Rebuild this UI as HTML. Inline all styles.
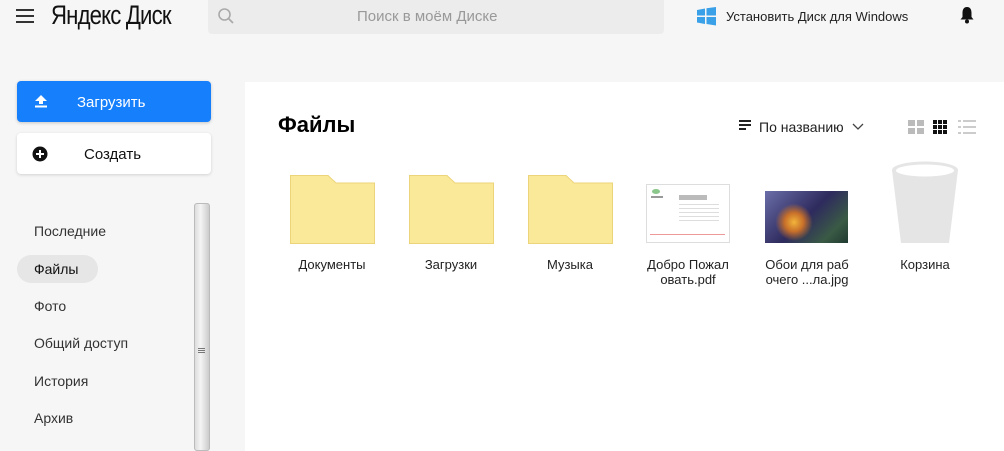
<!DOCTYPE html>
<html><head><meta charset="utf-8"><style>
*{margin:0;padding:0;box-sizing:border-box}
body{width:1004px;height:451px;overflow:hidden;background:#f6f6f6;font-family:"Liberation Sans",sans-serif;color:#222;position:relative}
.a{position:absolute}
.nav{left:34px;font-size:14px;color:#333}
.lbl{font-size:13px;color:#222;text-align:center;width:110px;line-height:15px}
.fold{width:84px;height:68px}
</style></head><body>
<div class="a" style="left:16px;top:9px;width:18px;height:2px;background:#333;box-shadow:0 6px 0 #333,0 12px 0 #333"></div>
<div class="a" style="left:51px;top:0px;font-size:27px;letter-spacing:-1px;color:#111;transform:scaleX(.82);transform-origin:left">Яндекс Диск</div>
<div class="a" style="left:208px;top:0;width:456px;height:34px;background:#ececec;border-radius:0 0 4px 4px"></div>
<svg class="a" style="left:217px;top:7px" width="18" height="18"><circle cx="7.5" cy="7.5" r="5.5" fill="none" stroke="#aaa" stroke-width="1.6"/><path d="M11.5 11.5L16 16" stroke="#aaa" stroke-width="1.8"/></svg>
<div class="a" style="left:357px;top:8px;font-size:15px;color:#999">Поиск в моём Диске</div>
<svg class="a" style="left:696px;top:6px" width="22" height="20"><path d="M1 4L9 2.5V9.5H1Z M10.5 2.2L20 1V9.5H10.5Z M1 11H9V18L1 16.5Z M10.5 11H20V19.5L10.5 18Z" fill="#3aa0e8"/></svg>
<div class="a" style="left:726px;top:9px;font-size:13px;color:#222">Установить Диск для Windows</div>
<svg class="a" style="left:958px;top:5px" width="18" height="20"><path d="M9 2C5.5 2 4.5 5 4.5 8V12L2.5 14.5H15.5L13.5 12V8C13.5 5 12.5 2 9 2Z" fill="#111"/><circle cx="9" cy="16.5" r="2" fill="#111"/></svg>

<div class="a" style="left:17px;top:81px;width:194px;height:41px;background:#167ffc;border-radius:4px;box-shadow:0 1px 3px rgba(0,0,0,.2)"></div>
<svg class="a" style="left:33px;top:94px" width="16" height="14"><path d="M8 1L14 7H10V10H6V7H2Z" fill="#fff"/><rect x="2" y="11.5" width="12" height="2" fill="#fff"/></svg>
<div class="a" style="left:77px;top:94px;font-size:15px;color:#fff">Загрузить</div>
<div class="a" style="left:17px;top:133px;width:194px;height:41px;background:#fff;border-radius:4px;box-shadow:0 1px 3px rgba(0,0,0,.15)"></div>
<svg class="a" style="left:32px;top:146px" width="16" height="16"><circle cx="8" cy="8" r="7.5" fill="#111"/><path d="M8 4V12M4 8H12" stroke="#fff" stroke-width="2"/></svg>
<div class="a" style="left:84px;top:146px;font-size:15px;color:#111">Создать</div>

<div class="a nav" style="top:223px">Последние</div>
<div class="a" style="left:17px;top:255px;width:81px;height:28px;background:#e6e6e6;border-radius:14px"></div>
<div class="a nav" style="top:261px;color:#111">Файлы</div>
<div class="a nav" style="top:298px">Фото</div>
<div class="a nav" style="top:335px">Общий доступ</div>
<div class="a nav" style="top:373px">История</div>
<div class="a nav" style="top:410px">Архив</div>
<div class="a" style="left:194px;top:203px;width:16px;height:248px;background:linear-gradient(90deg,#ddd,#f4f4f4 40%,#ccc);border:1px solid #bbb;border-radius:3px"></div>
<div class="a" style="left:198px;top:348px;width:7px;height:1px;background:#777;box-shadow:0 2px 0 #777,0 4px 0 #777"></div>

<div class="a" style="left:245px;top:82px;width:759px;height:369px;background:#fff"></div>
<div class="a" style="left:278px;top:112px;font-size:22px;font-weight:bold;color:#000">Файлы</div>
<div class="a" style="left:739px;top:120px;width:12px;height:2px;background:#222;box-shadow:0 4px 0 #222"></div>
<div class="a" style="left:739px;top:128px;width:7px;height:2px;background:#222"></div>
<div class="a" style="left:759px;top:119px;font-size:14px;color:#222">По названию</div>
<svg class="a" style="left:852px;top:123px" width="12" height="8"><path d="M1 1L6 6L11 1" fill="none" stroke="#444" stroke-width="1.3"/></svg>
<svg class="a" style="left:908px;top:119px" width="70" height="16">
<g fill="#bbb"><rect x="0" y="1" width="7" height="6"/><rect x="9" y="1" width="7" height="6"/><rect x="0" y="9" width="7" height="6"/><rect x="9" y="9" width="7" height="6"/></g>
<g fill="#111"><rect x="25" y="1" width="4" height="4"/><rect x="30" y="1" width="4" height="4"/><rect x="35" y="1" width="4" height="4"/><rect x="25" y="6" width="4" height="4"/><rect x="30" y="6" width="4" height="4"/><rect x="35" y="6" width="4" height="4"/><rect x="25" y="11" width="4" height="4"/><rect x="30" y="11" width="4" height="4"/><rect x="35" y="11" width="4" height="4"/></g>
<g fill="#ccc"><rect x="50" y="1" width="3" height="2"/><rect x="55" y="1" width="13" height="2"/><rect x="50" y="7" width="3" height="2"/><rect x="55" y="7" width="13" height="2"/><rect x="50" y="13" width="3" height="2"/><rect x="55" y="13" width="13" height="2"/></g></svg>

<svg class="a" style="left:290px;top:175px" width="85" height="69"><path d="M0.5 0.5H38L46 8H84.5V68.5H0.5Z" fill="#fbe99a" stroke="#ecd47a"/></svg>
<svg class="a" style="left:409px;top:175px" width="85" height="69"><path d="M0.5 0.5H38L46 8H84.5V68.5H0.5Z" fill="#fbe99a" stroke="#ecd47a"/></svg>
<svg class="a" style="left:528px;top:175px" width="85" height="69"><path d="M0.5 0.5H38L46 8H84.5V68.5H0.5Z" fill="#fbe99a" stroke="#ecd47a"/></svg>
<div class="a" style="left:646px;top:184px;width:84px;height:59px;background:#fff;border:1px solid #ddd">
<div class="a" style="left:5px;top:4px;width:8px;height:5px;background:#8bc78b;border-radius:50%"></div>
<div class="a" style="left:4px;top:11px;width:12px;height:2px;background:#999"></div>
<div class="a" style="left:32px;top:10px;width:28px;height:5px;background:#bbb"></div>
<div class="a" style="left:32px;top:19px;width:40px;height:18px;background:repeating-linear-gradient(#ddd 0 1px,#fff 1px 4px)"></div>
<div class="a" style="left:3px;top:49px;width:75px;height:1px;background:#e99"></div></div>
<div class="a" style="left:765px;top:191px;width:83px;height:52px;background:radial-gradient(circle at 35% 60%,#f2b43a 0,#c8702a 15%,transparent 30%),linear-gradient(135deg,#6a6ea8 0,#2e2a5e 50%,#3a5a45 80%,#203a30 100%)"></div>
<svg class="a" style="left:891px;top:161px" width="68" height="83"><path d="M1 9L10 82H58L67 9Z" fill="#e5e5e5"/><ellipse cx="34" cy="9" rx="33" ry="8.5" fill="#e5e5e5"/><ellipse cx="34" cy="9.5" rx="29" ry="6" fill="#fff"/></svg>

<div class="a lbl" style="left:277px;top:257px">Документы</div>
<div class="a lbl" style="left:396px;top:257px">Загрузки</div>
<div class="a lbl" style="left:515px;top:257px">Музыка</div>
<div class="a lbl" style="left:633px;top:257px">Добро Пожал<br>овать.pdf</div>
<div class="a lbl" style="left:752px;top:257px">Обои для раб<br>очего ...ла.jpg</div>
<div class="a lbl" style="left:870px;top:257px">Корзина</div>
</body></html>
